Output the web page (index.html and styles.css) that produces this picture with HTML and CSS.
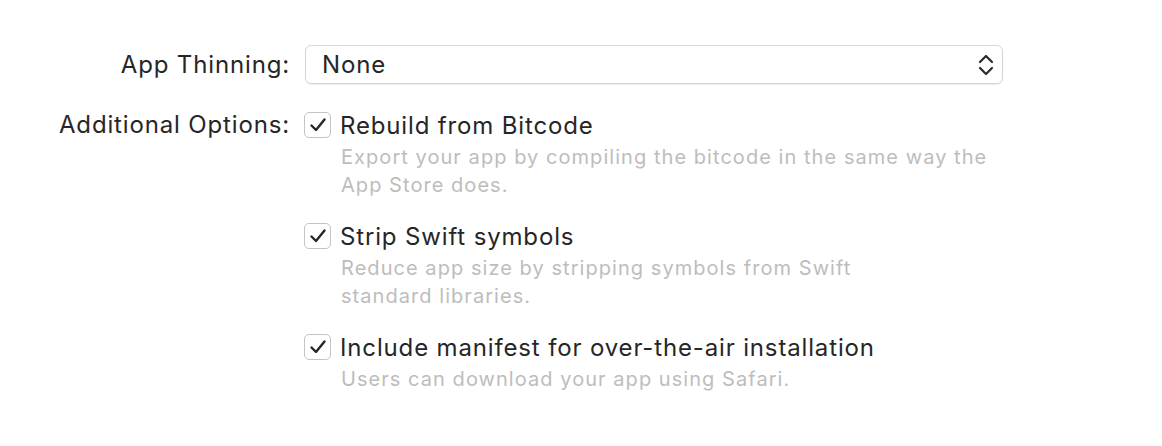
FILE: index.html
```html
<!DOCTYPE html>
<html>
<head>
<meta charset="utf-8">
<link rel="stylesheet" href="styles.css">
</head>
<body>
<div class="form">
  <div class="label label-popup">App Thinning:</div>
  <div class="popup">
    <span class="popup-value">None</span>
    <svg class="chevrons" width="18" height="26" viewBox="0 0 18 26">
      <path d="M3 10 L9 4 L15 10" fill="none" stroke="#2b2b2b" stroke-width="2.2" stroke-linecap="round" stroke-linejoin="round"/>
      <path d="M3 16 L9 22 L15 16" fill="none" stroke="#2b2b2b" stroke-width="2.2" stroke-linecap="round" stroke-linejoin="round"/>
    </svg>
  </div>

  <div class="label label-options">Additional Options:</div>
  <div class="options">
    <div class="option">
      <div class="option-main">
        <span class="checkbox"><svg width="18" height="16" viewBox="0 0 18 16"><path d="M2.5 8.5 L7 13 L15.5 2.5" fill="none" stroke="#262626" stroke-width="2.4" stroke-linecap="round" stroke-linejoin="round"/></svg></span>
        <span class="option-title">Rebuild from Bitcode</span>
      </div>
      <div class="option-desc">Export your app by compiling the bitcode in the same way the<br>App Store does.</div>
    </div>
    <div class="option">
      <div class="option-main">
        <span class="checkbox"><svg width="18" height="16" viewBox="0 0 18 16"><path d="M2.5 8.5 L7 13 L15.5 2.5" fill="none" stroke="#262626" stroke-width="2.4" stroke-linecap="round" stroke-linejoin="round"/></svg></span>
        <span class="option-title">Strip Swift symbols</span>
      </div>
      <div class="option-desc">Reduce app size by stripping symbols from Swift<br>standard libraries.</div>
    </div>
    <div class="option">
      <div class="option-main">
        <span class="checkbox"><svg width="18" height="16" viewBox="0 0 18 16"><path d="M2.5 8.5 L7 13 L15.5 2.5" fill="none" stroke="#262626" stroke-width="2.4" stroke-linecap="round" stroke-linejoin="round"/></svg></span>
        <span class="option-title">Include manifest for over-the-air installation</span>
      </div>
      <div class="option-desc">Users can download your app using Safari.</div>
    </div>
  </div>
</div>
</body>
</html>
```

FILE: styles.css
```css
html, body {
  margin: 0;
  padding: 0;
  background: #ffffff;
}
body {
  font-family: Inter, "Noto Sans", sans-serif;
  color: #262626;
  padding-top: 45px;
}
.form {
  display: grid;
  grid-template-columns: 290px 698px;
  column-gap: 15px;
  row-gap: 24px;
  align-items: start;
}
.label {
  text-align: right;
  font-size: 24px;
  letter-spacing: 0.85px;
  color: #262626;
}
.label-popup {
  line-height: 39px;
}
.label-options {
  line-height: 34px;
}
.popup {
  box-sizing: border-box;
  height: 39px;
  border: 1px solid #d6d6d6;
  border-radius: 6px;
  box-shadow: 0 1px 1px rgba(0,0,0,0.08);
  display: flex;
  align-items: center;
  justify-content: space-between;
  padding: 0 7px 0 16px;
}
.popup-value {
  font-size: 24px;
  letter-spacing: 0.85px;
  color: #262626;
}
.chevrons {
  display: block;
}
.options {
  display: flex;
  flex-direction: column;
  gap: 20px;
}
.option-main {
  display: flex;
  align-items: center;
  height: 34px;
}
.checkbox {
  box-sizing: border-box;
  width: 27px;
  height: 26px;
  border: 1px solid #c4c4c4;
  border-radius: 5px;
  display: flex;
  align-items: center;
  justify-content: center;
  margin-left: -1px;
  margin-right: 9px;
  background: #fff;
}
.option-title {
  font-size: 24px;
  letter-spacing: 0.85px;
  color: #262626;
}
.option-desc {
  font-size: 20px;
  line-height: 28px;
  margin-top: 1px;
  color: #bdbdbd;
  padding-left: 36px;
  letter-spacing: 1.05px;
}
```
